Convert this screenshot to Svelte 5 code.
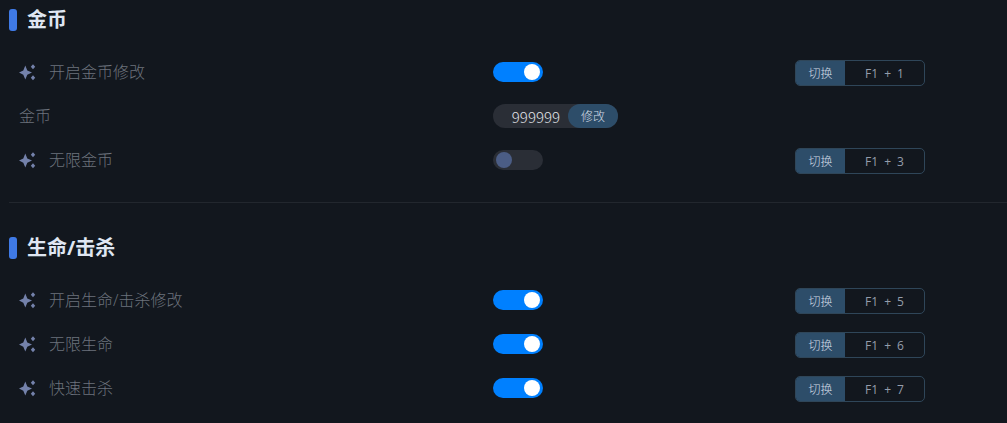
<script lang="ts">
    type Option = {
        id: string;
        label: string;
        kind: "toggle" | "number";
        on?: boolean;
        value?: string;
        keys?: string[];
    };

    type Group = {
        title: string;
        options: Option[];
    };

    let groups: Group[] = $state([
        {
            title: "金币",
            options: [
                { id: "gold-edit", label: "开启金币修改", kind: "toggle", on: true, keys: ["F1", "1"] },
                { id: "gold", label: "金币", kind: "number", value: "999999" },
                { id: "gold-infinite", label: "无限金币", kind: "toggle", on: false, keys: ["F1", "3"] }
            ]
        },
        {
            title: "生命/击杀",
            options: [
                { id: "life-edit", label: "开启生命/击杀修改", kind: "toggle", on: true, keys: ["F1", "5"] },
                { id: "life-infinite", label: "无限生命", kind: "toggle", on: true, keys: ["F1", "6"] },
                { id: "fast-kill", label: "快速击杀", kind: "toggle", on: true, keys: ["F1", "7"] }
            ]
        }
    ]);
</script>

<main class="panel">
    {#each groups as group}
        <section class="group">
            <h2>{group.title}</h2>
            <div class="options">
                {#each group.options as option (option.id)}
                    <div class="option">
                        <label for={option.id}>
                            {#if option.kind === "toggle"}
                                <svg class="spark" viewBox="0 0 18 18" aria-hidden="true">
                                    <path d="M6.3 2.6L8.3 7.4 13 9.6 8.3 11.8 6.3 16.6 4.3 11.8 0 9.6 4.3 7.4z" />
                                    <path d="M14 1.2l2.2 2.5L14 6.2l-2.2-2.5zM14 12.2l2.2 2.5-2.2 2.5-2.2-2.5z" />
                                </svg>
                            {/if}
                            {option.label}
                        </label>

                        <div class="control">
                            {#if option.kind === "toggle"}
                                <input class="switch" type="checkbox" id={option.id} bind:checked={option.on} />
                            {:else}
                                <div class="field">
                                    <input type="text" inputmode="numeric" id={option.id} bind:value={option.value} />
                                    <button type="button">修改</button>
                                </div>
                            {/if}
                        </div>

                        {#if option.keys}
                            <div class="hotkey">
                                <button type="button" onclick={() => (option.on = !option.on)}>切换</button>
                                <div class="keys">
                                    <span>{option.keys[0]}</span>
                                    <span>+</span>
                                    <span>{option.keys[1]}</span>
                                </div>
                            </div>
                        {/if}
                    </div>
                {/each}
            </div>
        </section>
    {/each}
</main>

<style>
    :global(body) {
        background: #12171e;
    }

    .panel {
        padding-left: 9px;
        font-family: "Open Sans", "Noto Sans CJK SC", sans-serif;
        color: #6d737d;
    }

    .group + .group {
        margin-top: 20px;
        padding-top: 25px;
        border-top: 1px solid #22272e;
    }

    h2 {
        display: flex;
        align-items: center;
        gap: 10px;
        height: 40px;
        margin: 0;
        font-size: 20px;
        line-height: 24px;
        font-weight: 700;
        color: #dfe6f2;
    }
    h2::before {
        content: "";
        width: 8px;
        height: 22px;
        border-radius: 3px;
        background: #3f7ae6;
    }

    .options {
        padding: 10px 0 0 10px;
    }

    .option {
        display: grid;
        grid-template-columns: 474fr 302fr 212fr;
        align-items: center;
        height: 44px;
    }

    label {
        display: flex;
        align-items: center;
        gap: 12px;
        font-size: 16px;
        line-height: 24px;
        font-weight: 300;
    }

    .spark {
        width: 18px;
        height: 18px;
        fill: #7482ab;
    }

    .control {
        display: flex;
    }

    /* Toggle switch */
    .switch {
        appearance: none;
        display: flex;
        align-items: center;
        width: 50px;
        height: 20px;
        margin: 0;
        padding: 0 3px;
        box-sizing: border-box;
        border-radius: 10px;
        background: #2a2e36;
        cursor: pointer;
    }
    .switch::before {
        content: "";
        width: 16px;
        height: 16px;
        border-radius: 50%;
        background: #4b5d85;
    }
    .switch:checked {
        justify-content: flex-end;
        background: #0080ff;
    }
    .switch:checked::before {
        background: #fff;
    }

    button {
        width: 50px;
        padding: 0;
        border: 0;
        background: #2d4d69;
        color: #d3dce6;
        font: inherit;
        font-size: 12px;
        font-weight: 300;
        cursor: pointer;
    }

    /* Number field with its apply button */
    .field {
        display: flex;
        width: 125px;
        height: 24px;
        border-radius: 12px;
        background: #2a2e36;
    }
    .field input {
        flex: 1;
        min-width: 0;
        padding: 0 8px 0 0;
        border: 0;
        outline: none;
        background: none;
        color: #e0e3e8;
        font-family: "Noto Sans CJK SC", sans-serif;
        font-size: 15px;
        font-weight: 300;
        text-align: right;
    }
    .field button {
        border-radius: 12px;
    }

    /* Hotkey box */
    .hotkey {
        display: flex;
        width: 130px;
        height: 26px;
        margin-top: 2px;
        box-sizing: border-box;
        border: 1px solid #2f4659;
        border-radius: 5px;
        overflow: hidden;
    }
    .hotkey button {
        width: 49px;
    }
    .keys {
        flex: 1;
        display: flex;
        align-items: center;
        justify-content: center;
        gap: 6px;
        font-size: 12px;
        color: #959dab;
    }
</style>
